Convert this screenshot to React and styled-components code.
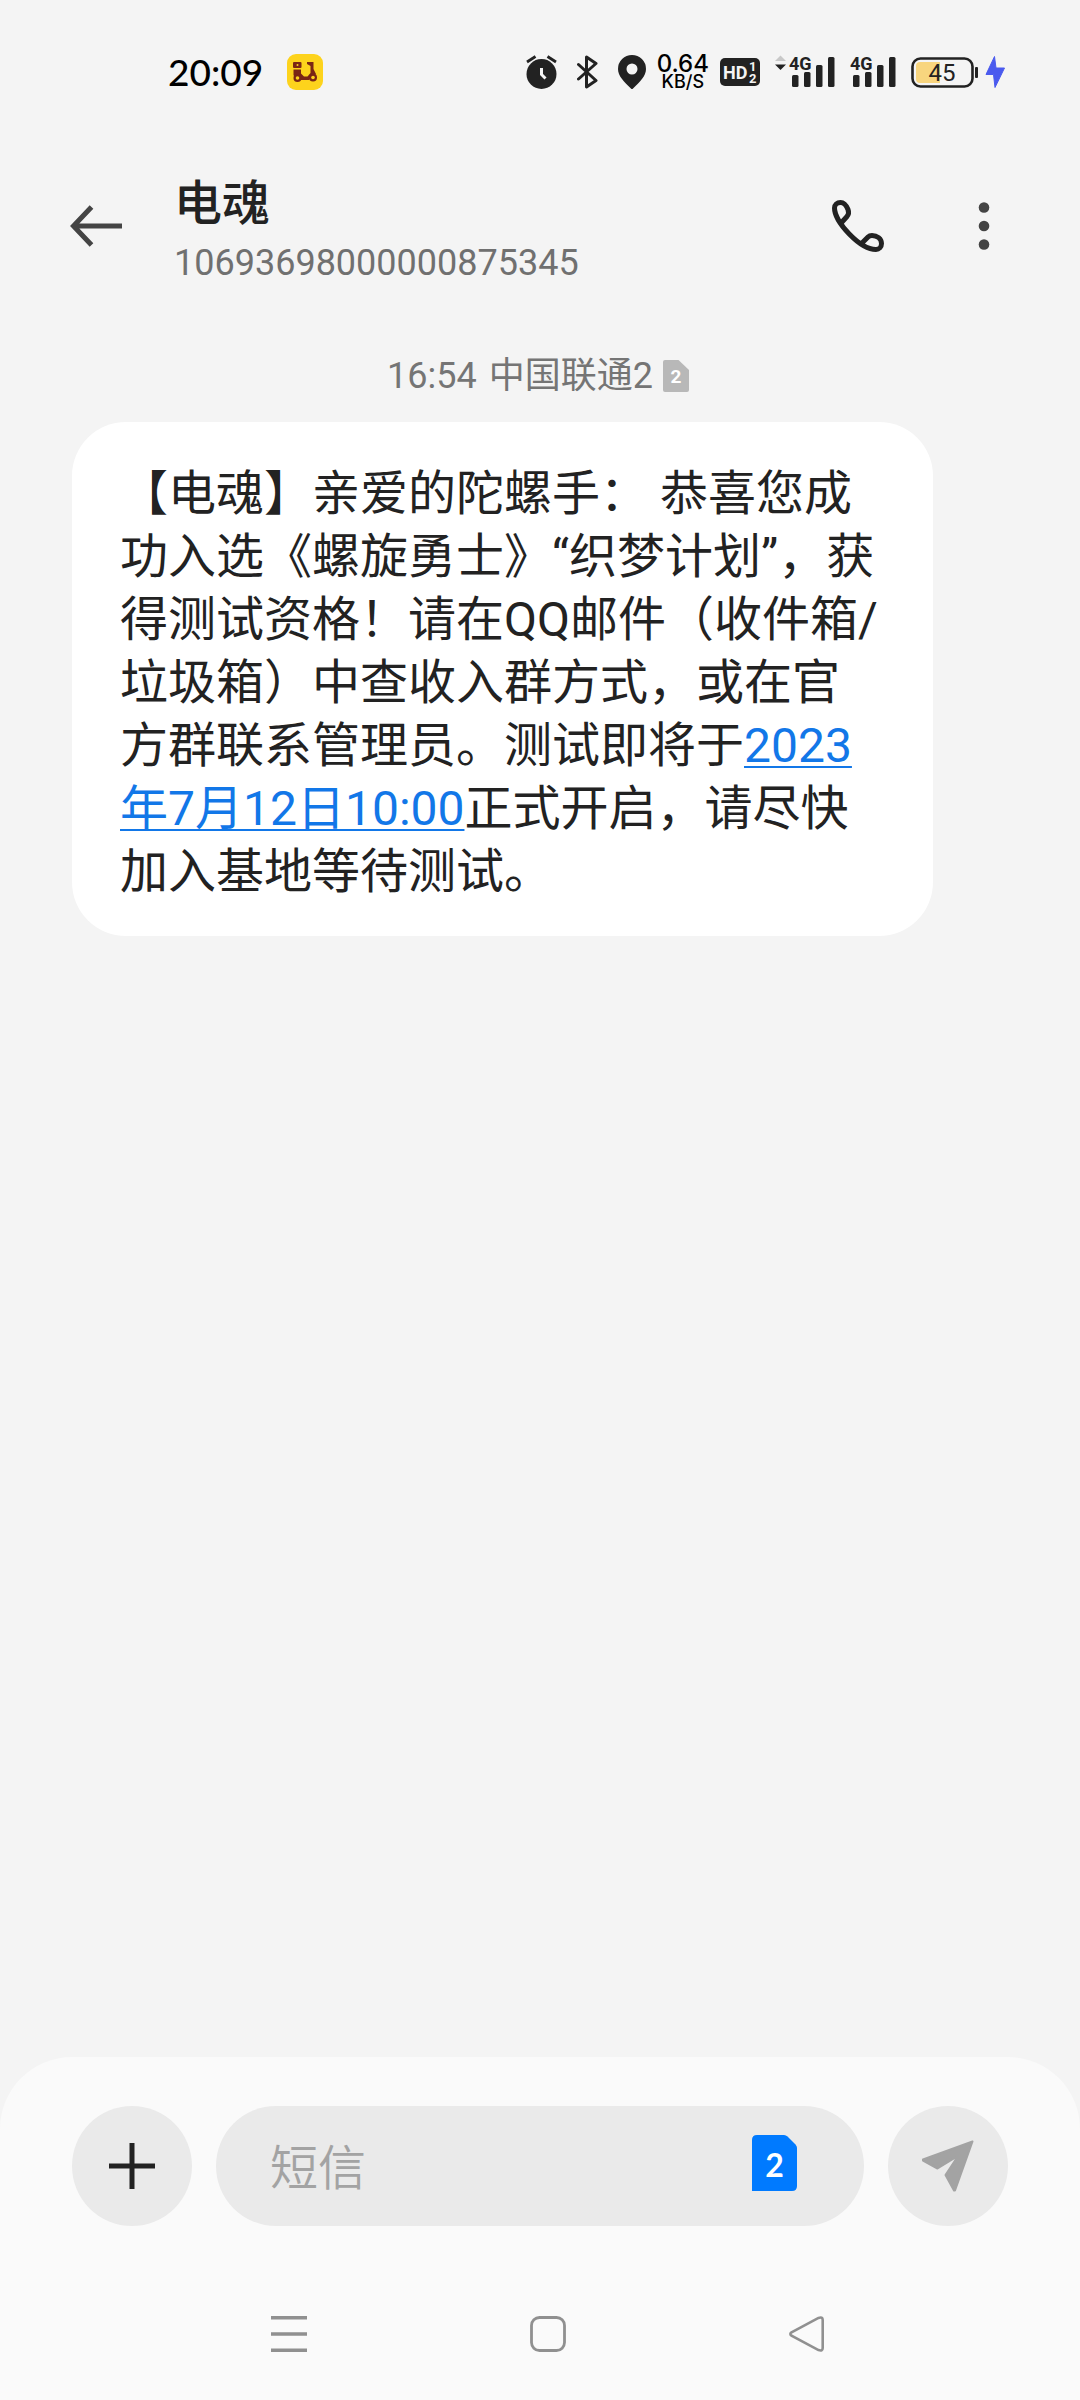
import styled, { createGlobalStyle } from 'styled-components'

const sans = "Roboto, 'Noto Sans CJK SC', sans-serif"
const ink = '#222'
const inkSoft = '#444'

export default function App() {
  return (
    <Screen>
      <GlobalStyle />
      <StatusBar />
      <Header title='电魂' number='10693698000000875345' />
      <Thread>
        <Stamp>
          <time>16:54</time>
          <Carrier>中国联通2 <SimSmall /></Carrier>
        </Stamp>
        <Bubble>
          【电魂】亲爱的陀螺手： 恭喜您成功入选《螺旋勇士》“织梦计划”，获得测试资格！请在QQ邮件（收件箱/垃圾箱）中查收入群方式，或在官方群联系管理员。测试即将于<a href='#date'>2023年7月12日10:00</a>正式开启，请尽快加入基地等待测试。
        </Bubble>
      </Thread>
      <Bottom>
        <Composer>
          <RoundButton type='button' aria-label='添加'>
            <svg width='46' height='46' viewBox='0 0 46 46' fill={ink}>
              <path d='M20.5 0h5v20.5H46v5H25.5V46h-5V25.5H0v-5h20.5z' />
            </svg>
          </RoundButton>
          <Field>
            <Input type='text' placeholder='短信' aria-label='短信' />
            <IconButton type='button' aria-label='切换SIM卡'>
              <SimBlue />
            </IconButton>
          </Field>
          <RoundButton type='submit' aria-label='发送'>
            <svg width='52' height='52' viewBox='0 0 52 52' fill='#a3a3a3' stroke='#a3a3a3' strokeWidth='2' strokeLinejoin='round'>
              <path d='M50.5 1.500L1 19.500V20.500L15.500 28.500L36 16L23.500 35L32 50.500H33Z' />
            </svg>
          </RoundButton>
        </Composer>
        <SystemNav />
      </Bottom>
    </Screen>
  )
}

function StatusBar() {
  return (
    <Status>
      <Clock>
        <time>20:09</time>
        <ScooterIcon />
      </Clock>
      <StatusIcons $gap={15}>
        <StatusIcons $gap={11}>
          <StatusIcons $gap={20}>
            <AlarmIcon />
            <BluetoothIcon />
            <PinIcon />
          </StatusIcons>
          <Speed>
            <b>0.64</b>
            <small>KB/S</small>
          </Speed>
          <HdIcon />
        </StatusIcons>
        <SignalIcon arrows />
        <SignalIcon />
        <StatusIcons $gap={7}>
          <BatteryIcon level={45} />
          <svg width='20' height='32' viewBox='0 0 20 32' fill='#4a5aee'>
            <path d='M9.500 .5L1 18.500H8.500L10 31.500L19.500 12H11L9.500 .5Z' stroke='#4a5aee' strokeLinejoin='round' />
          </svg>
        </StatusIcons>
      </StatusIcons>
    </Status>
  )
}

function Header({ title, number }) {
  return (
    <Top>
      <IconButton type='button' aria-label='返回'>
        <svg width='52' height='42' viewBox='0 0 52 42' fill='none' stroke={inkSoft} strokeWidth='5'>
          <path d='M52 21H4M21.500 2L3.500 21L21.500 40' />
        </svg>
      </IconButton>
      <Contact>
        <Name>{title}</Name>
        <Number>{number}</Number>
      </Contact>
      <IconButton type='button' aria-label='拨打电话'>
        <svg width='52' height='52' viewBox='0 0 52 52' fill='none' stroke={ink} strokeWidth='5' strokeLinejoin='round'>
          <path d='M10 22L15 16.500Q17.500 13.500 16 9.500C14 4.500 11.500 2.500 8.500 2.500C5 2.500 2.500 5 2.500 8C2.500 22 28 49.500 44 49.500C47 49.500 49.500 47 49.500 43.500C49.500 38.500 45 35.500 40 35.500C38 35.500 37 36 36 37L30 43' />
        </svg>
      </IconButton>
      <IconButton type='button' aria-label='更多'>
        <svg width='48' height='48' viewBox='0 0 48 48' fill={inkSoft}>
          <circle cx='24' cy='5.500' r='5.300' />
          <circle cx='24' cy='24' r='5.300' />
          <circle cx='24' cy='42.500' r='5.300' />
        </svg>
      </IconButton>
    </Top>
  )
}

function SystemNav() {
  return (
    <Nav>
      <IconButton type='button' aria-label='最近任务'>
        <svg width='36' height='36' viewBox='0 0 36 36' stroke='#909090' strokeWidth='3.400'>
          <path d='M0 1.800H36M0 18H36M0 34.200H36' />
        </svg>
      </IconButton>
      <IconButton type='button' aria-label='主屏幕'>
        <svg width='36' height='36' viewBox='0 0 36 36' fill='none' stroke='#909090' strokeWidth='2.800'>
          <rect x='1.500' y='1.500' width='33' height='33' rx='8' />
        </svg>
      </IconButton>
      <IconButton type='button' aria-label='返回上一级'>
        <svg width='36' height='36' viewBox='0 0 36 36' fill='none' stroke='#909090' strokeWidth='2.600'>
          <path d='M2.500 16.300L29.500 1.900Q33.700 .5 33.700 4V32Q33.700 35.500 29.500 34.100L2.500 19.700Q.2 18 2.500 16.300Z' />
        </svg>
      </IconButton>
    </Nav>
  )
}

const ScooterIcon = () => (
  <svg width='36' height='36' viewBox='0 0 36 36'>
    <rect width='36' height='36' rx='9' fill='#fdd31c' />
    <g fill='#7a2615'>
      <rect x='6' y='8' width='8.500' height='6' rx='1' />
      <path d='M6.500 15.500H14V19.500L17 22.500H20.500L23.500 19V12L20 10V8H26.500V15L29 20L26 22L22 26H9L6.500 21Z' />
      <circle cx='10.500' cy='24' r='4' />
      <circle cx='26' cy='23.500' r='4' />
    </g>
    <circle cx='10.500' cy='24' r='1.800' fill='#fdd31c' />
    <circle cx='26' cy='23.500' r='1.800' fill='#fdd31c' />
    <circle cx='10.500' cy='11' r='1' fill='#fdd31c' />
  </svg>
)

const AlarmIcon = () => (
  <svg width='31' height='34' viewBox='0 0 31 34' fill='none'>
    <circle cx='15.500' cy='19' r='15' fill={ink} />
    <path d='M1 7L9.500 1.500M21.500 1.500L30 7' stroke={ink} strokeWidth='2.800' />
    <path d='M15.500 13V19.500L19.500 23.500' stroke='#f4f4f4' strokeWidth='3' />
  </svg>
)

const BluetoothIcon = () => (
  <svg width='21' height='34' viewBox='0 0 21 34' fill='none' stroke={ink} strokeWidth='3' strokeLinejoin='round' strokeLinecap='round'>
    <path d='M1.500 9.500L19 25.500L9.500 32V2L19 8.500L1.500 24' />
  </svg>
)

const PinIcon = () => (
  <svg width='28' height='34' viewBox='0 0 28 34'>
    <path d='M14 0A14 14 0 0 0 0 14C0 21 6 27 14 34.500C22 27 28 21 28 14A14 14 0 0 0 14 0ZM14 8.500A5.500 5.500 0 1 1 14 19.500A5.500 5.500 0 1 1 14 8.500Z' fill={ink} fillRule='evenodd' />
  </svg>
)

const HdIcon = () => (
  <svg width='40' height='28' viewBox='0 0 40 28' fontFamily='Roboto, sans-serif' fontWeight='700' fill='#f4f4f4'>
    <rect width='40' height='28' rx='5' fill={ink} />
    <text x='3' y='21' fontSize='18'>HD</text>
    <text x='29' y='13' fontSize='13'>1</text>
    <text x='29' y='25' fontSize='13'>2</text>
  </svg>
)

function SignalIcon({ arrows }) {
  const left = arrows ? 14 : 0
  return (
    <svg width={left + 46} height='42' viewBox={`${-left} -4 ${left + 46} 42`} fill={ink}>
      {arrows && (
        <>
          <path d='M-14 6L-8.500 .5L-3 6Z' fill='#c8c8c8' />
          <path d='M-14 9.500H-3L-8.500 15Z' />
        </>
      )}
      <text x='0' y='15' fontSize='18' fontWeight='700' fontFamily='Roboto, sans-serif'>4G</text>
      <rect x='3' y='20' width='6.500' height='12' rx='1.500' />
      <rect x='15' y='17' width='6.500' height='15' rx='1.500' />
      <rect x='27' y='10' width='6.500' height='22' rx='1.500' />
      <rect x='39' y='2' width='6.500' height='30' rx='1.500' />
    </svg>
  )
}

const BatteryIcon = ({ level }) => (
  <svg width='67' height='31' viewBox='0 0 67 31'>
    <rect x='1.500' y='1.500' width='60' height='28' rx='8' fill='none' stroke={ink} strokeWidth='2.600' />
    <path d='M9 5H29V26H9Q5 26 5 22V9Q5 5 9 5Z' fill='#f8d57e' />
    <rect x='64' y='10' width='3' height='11' rx='1' fill={ink} />
    <text x='31' y='24' fontSize='24' fontFamily='Roboto, sans-serif' textAnchor='middle' fill={ink}>{level}</text>
  </svg>
)

const SimSmall = () => (
  <svg width='26' height='32' viewBox='0 0 26 32'>
    <path d='M2 0H15.500L26 10V30Q26 32 24 32H2Q0 32 0 30V2Q0 0 2 0Z' fill='#b8b8b8' />
    <text x='13' y='23' fontSize='19' fontWeight='700' fontFamily='Roboto, sans-serif' textAnchor='middle' fill='#fff'>2</text>
  </svg>
)

const SimBlue = () => (
  <svg width='45' height='62' viewBox='0 0 45 62'>
    <path d='M5 0H32Q34 0 35.500 1.500L43.500 9.500Q45 11 45 13V51Q45 56 40 56H0V5Q0 0 5 0Z' fill='#007aff' />
    <text x='22.500' y='42' fontSize='32' fontWeight='700' fontFamily='Lato, sans-serif' textAnchor='middle' fill='#fff'>2</text>
  </svg>
)

const GlobalStyle = createGlobalStyle`
  * {
    box-sizing: border-box;
  }
  body {
    margin: 0;
    background: #f4f4f4;
    color: ${ink};
    font-family: ${sans};
  }
  svg {
    display: block;
    flex: none;
  }
`

const Screen = styled.div`
  display: flex;
  flex-direction: column;
  min-height: 100vh;
`

const Status = styled.div`
  display: flex;
  align-items: center;
  justify-content: space-between;
  padding: 50px 75px 50px 168px;
`

const Clock = styled.div`
  display: flex;
  align-items: center;
  gap: 24px;
  color: #000;
  font-family: Lato, sans-serif;
  font-size: 37px;
  font-weight: 500;
  line-height: 44px;
`

const StatusIcons = styled.div`
  display: flex;
  align-items: center;
  gap: ${props => props.$gap}px;
`

const Speed = styled.div`
  display: flex;
  flex-direction: column;
  align-items: center;
  padding-top: 2px;
  color: #000;
  font-family: Inter, sans-serif;
  line-height: 18px;
  b {
    font-size: 24px;
    font-weight: 500;
  }
  small {
    font-size: 18px;
    font-weight: 500;
  }
`

const Top = styled.header`
  display: flex;
  align-items: center;
  padding: 20px 72px 59px 70px;
`

const IconButton = styled.button`
  display: flex;
  align-items: center;
  justify-content: center;
  padding: 0;
  border: 0;
  background: none;
`

const Contact = styled.div`
  flex: 1;
  padding: 5px 0 0 52px;
  & ~ button + button {
    margin-left: 76px;
  }
`

const Name = styled.h1`
  margin: 0;
  font-size: 48px;
  font-weight: 500;
  line-height: 70px;
`

const Number = styled.div`
  color: #707070;
  font-size: 36px;
  line-height: 48px;
`

const Thread = styled.main`
  flex: 1;
  padding: 0 72px;
`

const Stamp = styled.div`
  display: flex;
  align-items: center;
  justify-content: center;
  gap: 12px;
  margin-bottom: 16px;
  padding-right: 4px;
  color: #757575;
  font-size: 36px;
  line-height: 60px;
`

const Carrier = styled.span`
  display: flex;
  align-items: center;
  gap: 10px;
`

const Bubble = styled.p`
  width: 92%;
  margin: 0;
  padding: 40px 48px 33px;
  border-radius: 54px;
  background: #fff;
  font-size: 48px;
  line-height: 63px;
  a {
    color: #1277e8;
    text-decoration-thickness: 2px;
    text-decoration-skip-ink: none;
    text-underline-offset: 4px;
  }
`

const Bottom = styled.footer`
  border-radius: 72px 72px 0 0;
  background: #fafafa;
`

const Composer = styled.form`
  display: flex;
  gap: 24px;
  padding: 49px 72px 42px;
`

const RoundButton = styled(IconButton)`
  flex: none;
  width: 120px;
  height: 120px;
  border-radius: 50%;
  background: #eaeaea;
`

const Field = styled.div`
  display: flex;
  flex: 1;
  align-items: center;
  min-width: 0;
  padding: 0 67px 0 54px;
  border-radius: 60px;
  background: #eaeaea;
`

const Input = styled.input`
  flex: 1;
  min-width: 0;
  padding: 4px 0 0;
  border: 0;
  outline: 0;
  background: none;
  color: ${ink};
  font-family: ${sans};
  font-size: 48px;
  &::placeholder {
    color: #a3a3a3;
    font-weight: 350;
  }
`

const Nav = styled.nav`
  display: grid;
  grid-template-columns: repeat(3, 1fr);
  height: 132px;
  padding: 0 144px 0 160px;
`
